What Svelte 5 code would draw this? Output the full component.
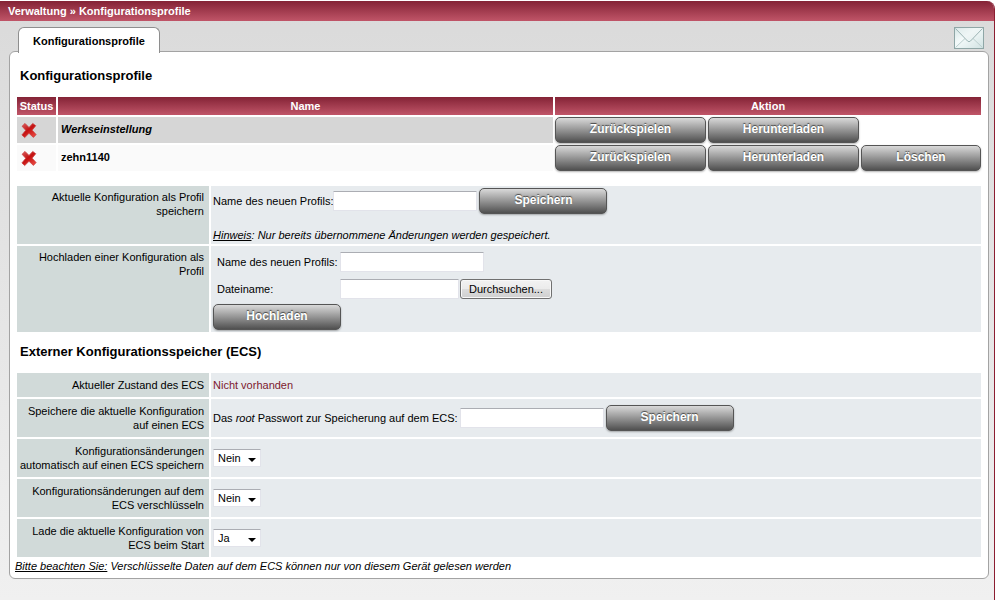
<script>
    const profiles = [
        { name: "Werkseinstellung", builtin: true },
        { name: "zehn1140", builtin: false },
    ];

    const settings = [
        { id: "ecs-auto", label: "Konfigurationsänderungen automatisch auf einen ECS speichern", value: "Nein" },
        { id: "ecs-crypt", label: "Konfigurationsänderungen auf dem ECS verschlüsseln", value: "Nein" },
        { id: "ecs-load", label: "Lade die aktuelle Konfiguration von ECS beim Start", value: "Ja" },
    ];
</script>

<div class="frame">
    <header>Verwaltung » Konfigurationsprofile</header>

    <nav>
        <a class="tab" href="#profile">Konfigurationsprofile</a>
        <a class="mail" href="#mail" aria-label="Nachrichten">
            <svg width="30" height="22" viewBox="0 0 30 22">
                <defs>
                    <linearGradient id="paper" x1="0" y1="0" x2="1" y2="1">
                        <stop offset="0" stop-color="#d3e4e4" />
                        <stop offset="0.4" stop-color="#f4fafa" />
                        <stop offset="1" stop-color="#d0e2e2" />
                    </linearGradient>
                </defs>
                <rect x="0.5" y="0.5" width="29" height="21" fill="url(#paper)" stroke="#8fa6a6" />
                <path d="M1.5 20.5 L11 11.5 M28.5 20.5 L19 11.5" fill="none" stroke="#bccece" />
                <path d="M1.5 1.5 L13.5 14 Q15 15.5 16.5 14 L28.5 1.5" fill="#e9f2f2" fill-opacity="0.5" stroke="#9db5b5" />
            </svg>
        </a>
    </nav>

    <main id="profile">
        <h2>Konfigurationsprofile</h2>

        <table class="profiles">
            <thead>
                <tr>
                    <th class="status">Status</th>
                    <th>Name</th>
                    <th colspan="3">Aktion</th>
                </tr>
            </thead>
            <tbody>
                {#each profiles as profile}
                    <tr class:builtin={profile.builtin}>
                        <td class="status">
                            <svg width="16" height="17" viewBox="0 0 18 18" role="img" aria-label="inaktiv">
                                <defs>
                                    <linearGradient id="cross" x1="0" y1="0" x2="0.8" y2="1">
                                        <stop offset="0" stop-color="#d96060" />
                                        <stop offset="0.5" stop-color="#c41111" />
                                        <stop offset="1" stop-color="#ea4a42" />
                                    </linearGradient>
                                </defs>
                                <path
                                    d="M4.5 1 L9 5.5 L13.2 1 L16.6 3.6 L12.5 8.6 L17 13.6 L14 16.8 L9 12.2 L4.2 17 L1 14 L5.3 8.8 L1.2 4.2 Z"
                                    fill="url(#cross)"
                                    stroke="#c93a3a"
                                    stroke-width="0.8"
                                    stroke-linejoin="round"
                                />
                            </svg>
                        </td>
                        <td class="name">{profile.name}</td>
                        <td class="action"><button class="btn">Zurückspielen</button></td>
                        <td class="action"><button class="btn">Herunterladen</button></td>
                        <td class="remove">
                            {#if !profile.builtin}
                                <button class="btn">Löschen</button>
                            {/if}
                        </td>
                    </tr>
                {/each}
            </tbody>
        </table>

        <table class="form">
            <tbody>
                <tr>
                    <th>Aktuelle Konfiguration als Profil speichern</th>
                    <td class="top">
                        <div class="line">
                            <label for="new-name">Name des neuen Profils:</label>
                            <input id="new-name" type="text" />
                            <button class="btn wide">Speichern</button>
                        </div>
                        <p class="hint"><u>Hinweis</u>: Nur bereits übernommene Änderungen werden gespeichert.</p>
                    </td>
                </tr>
                <tr>
                    <th>Hochladen einer Konfiguration als Profil</th>
                    <td class="top">
                        <div class="upload">
                            <label for="upload-name">Name des neuen Profils:</label>
                            <input id="upload-name" type="text" />
                            <label for="upload-file">Dateiname:</label>
                            <div class="file">
                                <input id="upload-file" type="text" readonly />
                                <button class="browse">Durchsuchen...</button>
                            </div>
                        </div>
                        <button class="btn wide">Hochladen</button>
                    </td>
                </tr>
            </tbody>
        </table>

        <h2>Externer Konfigurationsspeicher (ECS)</h2>

        <table class="form ecs">
            <tbody>
                <tr>
                    <th>Aktueller Zustand des ECS</th>
                    <td class="missing">Nicht vorhanden</td>
                </tr>
                <tr>
                    <th>Speichere die aktuelle Konfiguration auf einen ECS</th>
                    <td>
                        <div class="line">
                            <label for="root-pw">Das <i>root</i> Passwort zur Speicherung auf dem ECS:</label>
                            <input id="root-pw" type="password" />
                            <button class="btn wide">Speichern</button>
                        </div>
                    </td>
                </tr>
                {#each settings as setting}
                    <tr>
                        <th><label for={setting.id}>{setting.label}</label></th>
                        <td>
                            <div class="select">
                                <select id={setting.id} bind:value={setting.value}>
                                    <option>Ja</option>
                                    <option>Nein</option>
                                </select>
                            </div>
                        </td>
                    </tr>
                {/each}
            </tbody>
        </table>

        <p class="note"><u>Bitte beachten Sie:</u> Verschlüsselte Daten auf dem ECS können nur von diesem Gerät gelesen werden</p>
    </main>
</div>

<style>
    :global(body) {
        background: #fff;
    }

    .frame {
        box-sizing: border-box;
        min-height: calc(100vh - 1px);
        margin: 1px 5px 0 0;
        border-right: 1px solid #8c1d31;
        border-top-right-radius: 8px;
        background: linear-gradient(#dadada, #f0f0f0);
        font-family: Arial, "Liberation Sans", sans-serif;
        font-size: 11px;
        line-height: 14px;
        color: #000;
        overflow: hidden;
    }

    header {
        padding: 3px 8px;
        background: linear-gradient(#842336, #c05568);
        color: #fff;
        font-weight: bold;
    }

    nav {
        display: flex;
        justify-content: space-between;
        height: 30px;
        padding: 0 10px 0 18px;
    }

    .tab {
        box-sizing: border-box;
        z-index: 1;
        height: 26px;
        margin-top: 6px;
        margin-bottom: -2px;
        padding: 6px 14px;
        border: 1px solid #8e8e8e;
        border-bottom: none;
        border-radius: 6px 6px 0 0;
        background: #fff;
        color: #000;
        font-weight: bold;
        text-decoration: none;
    }

    .mail {
        margin-top: 6px;
    }

    svg {
        display: block;
    }

    main {
        margin: 0 5px 0 9px;
        padding: 6px 5px 5px;
        border: 1px solid #a3a3a3;
        border-radius: 6px;
        background: #fff;
    }

    h2 {
        margin: 0;
        padding: 9px 5px 10px;
        font-size: 13px;
        line-height: 18px;
    }

    table {
        width: 100%;
        border-spacing: 2px;
    }

    th,
    td {
        padding: 0;
    }

    .profiles {
        margin-bottom: 11px;
    }

    .profiles th {
        height: 18px;
        background: linear-gradient(#842336, #c05568);
        color: #fff;
    }

    .profiles td {
        box-sizing: border-box;
        height: 26px;
    }

    .profiles .status {
        width: 39px;
    }

    .profiles td.status,
    .name {
        background: #fafafa;
    }

    .builtin td.status,
    .builtin .name {
        background: #d6d6d6;
    }

    td.status svg {
        margin-left: 4px;
    }

    .name {
        padding: 0 3px 2px;
        font-weight: bold;
    }

    .builtin .name {
        font-style: italic;
    }

    .action {
        width: 151px;
    }

    .remove {
        width: 120px;
    }

    .btn {
        display: block;
        box-sizing: border-box;
        width: 100%;
        height: 26px;
        padding: 0 0 2px;
        border: 1px solid #555;
        border-radius: 5px;
        background: linear-gradient(#d9d9d9, #505050);
        box-shadow: 0 1px 2px rgba(0, 0, 0, 0.3);
        color: #fff;
        font: bold 12px/14px Arial, "Liberation Sans", sans-serif;
        text-shadow: 0 -1px 1px #444;
        cursor: pointer;
    }

    .btn.wide {
        width: 128px;
    }

    .form th {
        width: 185px;
        padding: 4px 5px 6px 2px;
        background: #d1dad9;
        font-weight: normal;
        text-align: right;
        vertical-align: top;
    }

    .ecs th {
        padding: 5px 5px 5px 2px;
    }

    .form td {
        padding: 0 2px;
        background: #e7ebee;
    }

    .form td.top {
        padding: 2px;
        vertical-align: top;
    }

    .line {
        display: flex;
        align-items: center;
    }

    .line .btn {
        margin-left: 2px;
    }

    .ecs .line input {
        margin-left: 2px;
    }

    input {
        box-sizing: border-box;
        width: 144px;
        height: 20px;
        padding: 1px 3px;
        border: 1px solid #e2e3ea;
        border-top-color: #abadb3;
        border-radius: 1px;
        background: #fff;
        font: inherit;
    }

    .hint,
    .note {
        margin: 0;
        font-style: italic;
    }

    .hint {
        margin-top: 14px;
    }

    .upload {
        display: grid;
        grid-template-columns: 121px auto;
        grid-auto-rows: 20px;
        gap: 7px 2px;
        align-items: center;
        padding: 4px 4px 5px;
    }

    .upload label {
        white-space: nowrap;
    }

    .file {
        display: flex;
        gap: 1px;
    }

    .file input {
        width: 119px;
    }

    .browse {
        box-sizing: border-box;
        width: 92px;
        height: 20px;
        padding: 0;
        border: 1px solid #707070;
        border-radius: 3px;
        background: linear-gradient(#f2f2f2 0%, #ebebeb 50%, #dddddd 50%, #cfcfcf 100%);
        box-shadow: inset 0 0 0 1px #f8f8f8;
        color: #000;
        font: inherit;
    }

    .missing {
        color: #7d1a2e;
    }

    .select {
        position: relative;
        width: 48px;
    }

    .select::after {
        content: "";
        position: absolute;
        top: 9px;
        right: 5px;
        border: 4px solid transparent;
        border-top-color: #000;
        border-bottom: none;
        pointer-events: none;
    }

    select {
        display: block;
        box-sizing: border-box;
        width: 100%;
        height: 18px;
        padding: 0 4px;
        appearance: none;
        border: 1px solid #e2e3ea;
        border-top-color: #abadb3;
        border-radius: 1px;
        background: #fff;
        color: #000;
        font: inherit;
    }
</style>
